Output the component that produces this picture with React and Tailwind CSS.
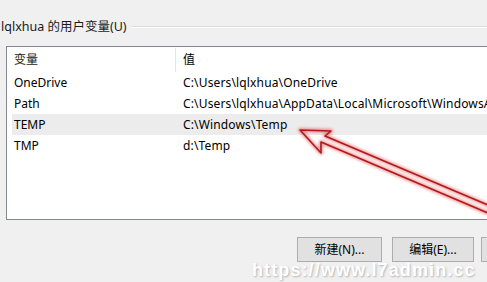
import React from 'react'

const rows = [
  { name: 'OneDrive', value: 'C:\\Users\\lqlxhua\\OneDrive' },
  { name: 'Path', value: 'C:\\Users\\lqlxhua\\AppData\\Local\\Microsoft\\WindowsApps;' },
  { name: 'TEMP', value: 'C:\\Windows\\Temp', selected: true },
  { name: 'TMP', value: 'd:\\Temp' },
]

function Arrow() {
  return (
    <svg className="absolute left-0 top-0 pointer-events-none" width="487" height="282" viewBox="0 0 487 282">
      <defs>
        <filter id="glow" x="-20%" y="-20%" width="140%" height="140%">
          <feGaussianBlur stdDeviation="1.6" />
        </filter>
      </defs>
      <polygon
        points="300,130 331,131 325,136 490,206 490,214 321,142 321,153"
        fill="none"
        stroke="#e0403f"
        strokeWidth="4"
        strokeLinejoin="round"
        opacity="0.55"
        filter="url(#glow)"
      />
      <polygon
        points="300,130 331,131 325,136 490,206 490,214 321,142 321,153"
        fill="none"
        stroke="#b01a1d"
        strokeWidth="1.6"
        strokeLinejoin="round"
      />
    </svg>
  )
}

export default function App() {
  return (
    <div className="relative w-[487px] h-[282px] overflow-hidden bg-[#f0f0f0] font-['Noto_Sans','Noto_Sans_CJK_SC',sans-serif] text-[12px] text-black">
      {/* titre du groupe */}
      <div className="flex items-center pt-[19px] pl-[1px]">
        <span className="text-[12.5px] leading-[16px] text-[#1a1a1a]">lqlxhua 的用户变量(U)</span>
        <div className="flex-1 ml-[4px] border-t border-[#dcdcdc] border-b border-b-white" />
      </div>

      {/* liste */}
      <div className="ml-[6px] -mr-4 mt-[11px] h-[174px] border border-[#828790] bg-white">
        <div className="flex h-[25px] items-center">
          <div className="shrink-0 w-[168px] pl-[7px] text-[#1a1a1a]">变量</div>
          <div className="h-[24px] border-l border-[#e5e5e5] pl-[7px] flex items-center">值</div>
        </div>
        {rows.map((r) => (
          <div
            key={r.name}
            className={`flex h-[21px] items-center ${r.selected ? 'bg-[#ececec] ml-[5px]' : ''}`}
          >
            <div className={`shrink-0 ${r.selected ? 'w-[163px] pl-[2px]' : 'w-[168px] pl-[7px]'}`}>{r.name}</div>
            <div className="pl-[8px] whitespace-nowrap tracking-[0.15px]">{r.value}</div>
          </div>
        ))}
      </div>

      {/* boutons */}
      <div className="flex gap-[10px] pl-[297px] mt-[17px]">
        <button className="shrink-0 w-[85px] h-[25px] border border-[#adadad] bg-[#e1e1e1] text-[12px]">新建(N)...</button>
        <button className="shrink-0 w-[82px] h-[25px] border border-[#adadad] bg-[#e1e1e1] text-[12px]">编辑(E)...</button>
        <button className="shrink-0 w-[82px] h-[25px] border border-[#adadad] bg-[#e1e1e1] -ml-[3px]" aria-label="删除" />
      </div>

      <Arrow />

      {/* filigrane */}
      <div className="absolute left-[252px] top-[259px] font-['Liberation_Sans',sans-serif] font-bold text-[18px] leading-[22px] tracking-[1.1px] text-white [text-shadow:1px_1px_2px_rgba(0,0,0,0.25)]">
        https://www.l7admin.cc
      </div>
    </div>
  )
}
